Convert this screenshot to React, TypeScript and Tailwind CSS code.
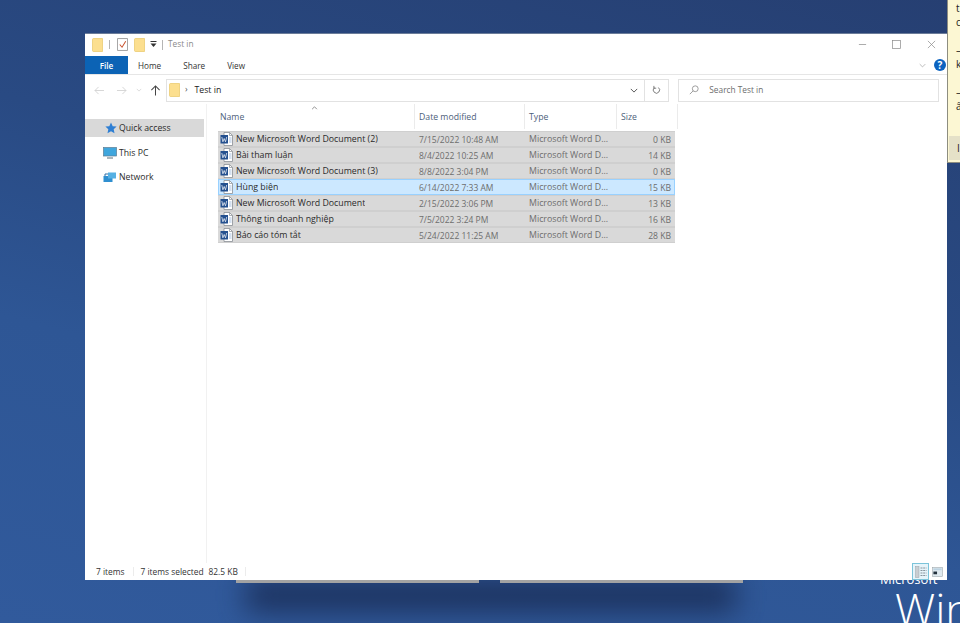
const font = { fontFamily: '"Open Sans", "Noto Sans", sans-serif' };

function Folder({ className = "" }: { className?: string }) {
  return (
    <svg viewBox="0 0 11 14" className={className}>
      <path d="M0.5 1.5 Q0.5 0.5 1.5 0.5 H10.5 V13.5 H1.5 Q0.5 13.5 0.5 12.5 Z" fill="#fcdf8f" stroke="#e8c766" strokeWidth="0.7" />
    </svg>
  );
}

function WordIcon() {
  return (
    <svg viewBox="0 0 13 14" className="w-[13px] h-[14px] shrink-0">
      <path d="M4 0.5 H9.5 L12.5 3.5 V13.5 H4 Z" fill="#ffffff" stroke="#8a8f96" strokeWidth="0.8" />
      <path d="M9.5 0.5 V3.5 H12.5" fill="none" stroke="#8a8f96" strokeWidth="0.7" />
      <rect x="0.5" y="3" width="7.5" height="8.5" fill="#24508f" />
      <path d="M1.8 5 L2.9 9.8 L4.2 6.5 L5.5 9.8 L6.7 5" fill="none" stroke="#ffffff" strokeWidth="0.7" />
      <path d="M9 6 H11.5 M9 8 H11.5 M9 10 H11.5" stroke="#7ea3d3" strokeWidth="0.7" />
    </svg>
  );
}

const rows = [
  ["New Microsoft Word Document (2)", "7/15/2022 10:48 AM", "0 KB"],
  ["Bài tham luận", "8/4/2022 10:25 AM", "14 KB"],
  ["New Microsoft Word Document (3)", "8/8/2022 3:04 PM", "0 KB"],
  ["Hùng biện", "6/14/2022 7:33 AM", "15 KB"],
  ["New Microsoft Word Document", "2/15/2022 3:06 PM", "13 KB"],
  ["Thông tin doanh nghiệp", "7/5/2022 3:24 PM", "16 KB"],
  ["Báo cáo tóm tắt", "5/24/2022 11:25 AM", "28 KB"],
];

function Row({ r, active }: { r: string[]; active: boolean }) {
  return (
    <div
      className={`flex items-center h-[16px] border-y ${
        active ? "bg-[#cce8ff] border-[#99d1ff] shadow-[inset_1px_0_0_#99d1ff,inset_-1px_0_0_#99d1ff]" : "bg-[#d9d9d9] border-[#cfcfcf]"
      }`}
    >
      <div className="w-[196px] pl-[2px] flex items-center gap-[3px] text-[#2b2b2b] text-[8.8px]">
        <WordIcon />
        <span className="truncate pt-[2px]">{r[0]}</span>
      </div>
      <div className="w-[110px] pl-[5px] pt-[2px] text-[#6d6d6d] text-[8.5px]">{r[1]}</div>
      <div className="w-[92px] pl-[5px] pt-[2px] text-[#6d6d6d] text-[8.8px]">Microsoft Word D...</div>
      <div className="w-[57px] text-right pr-[2px] pt-[2px] text-[#6d6d6d] text-[8.6px]">{r[2]}</div>
    </div>
  );
}

function NavItem({ icon, label, active = false }: { icon: React.ReactNode; label: string; active?: boolean }) {
  return (
    <div className={`h-[18px] w-[119px] flex items-center gap-[2px] pl-[18px] text-[8.7px] text-[#2b2b2b] ${active ? "bg-[#d9d9d9]" : ""}`}>
      {icon}
      <span className="pt-[2px]">{label}</span>
    </div>
  );
}

export default function App() {
  return (
    <div
      style={font}
      className="relative w-[960px] h-[623px] overflow-hidden bg-[linear-gradient(15deg,#315a9c_0%,#2e5695_35%,#294a83_60%,#263f72_100%)]"
    >
      {/* Shadows and grey bars of windows behind */}
      <div className="absolute left-[246px] top-[578px] w-[490px] h-[34px] bg-[#16264c] opacity-75 blur-[14px]" />
      <div className="absolute left-[236px] top-[580px] w-[243px] h-[3px] bg-[#a3a3a3]" />
      <div className="absolute left-[500px] top-[580px] w-[243px] h-[3px] bg-[#a3a3a3]" />

      {/* Microsoft Windows wordmark */}
      <div className="absolute left-[880px] top-[570px] text-[13px] leading-[18px] text-white">Microsoft</div>
      <div className="absolute left-[895px] top-[581px] text-[45px] leading-[56px] font-light text-white whitespace-nowrap">
        Windows
      </div>

      {/* Yellow note */}
      <div className="absolute left-[947px] top-0 w-[40px] h-[163px] bg-[#fcf7d3] border-l border-b border-[#8d8d80] text-[10px] leading-[14px] text-[#222222] pl-[8px] pt-[1px]">
        <div>t</div>
        <div>c</div>
        <div className="h-[14px]" />
        <div>–</div>
        <div>k</div>
        <div className="h-[14px]" />
        <div>–</div>
        <div>â</div>
        <div className="absolute left-[1px] top-[136px] w-[39px] h-[24px] bg-[#e5e1c8] pl-[8px] pt-[5px] text-[10px]">I</div>
      </div>

      {/* Explorer window */}
      <div className="absolute left-[85px] top-[33px] w-[862px] h-[547px] bg-white flex flex-col border-t border-[#6b7c99]">
        {/* Title bar */}
        <div className="h-[22px] pb-[1px] flex items-center pl-[7px] shrink-0">
          <Folder className="w-[11px] h-[14px]" />
          <div className="w-px h-[9px] bg-[#b5b5b5] ml-[6px]" />
          <svg viewBox="0 0 12 14" className="w-[11px] h-[13px] ml-[7px]">
            <path d="M0.5 0.5 H11.5 V13.5 H0.5 Z" fill="#fff" stroke="#9a9a9a" />
            <path d="M3 7 L5.5 10 L9.5 3.5" fill="none" stroke="#c8502b" strokeWidth="1.1" />
          </svg>
          <Folder className="w-[11px] h-[14px] ml-[6px]" />
          <svg viewBox="0 0 7 7" className="w-[7px] h-[7px] ml-[5px]">
            <path d="M0.5 0.5 H6.5" stroke="#333" />
            <path d="M0.5 2.5 H6.5 L3.5 6 Z" fill="#333" />
          </svg>
          <div className="w-px h-[10px] bg-[#b5b5b5] ml-[5px]" />
          <span className="ml-[5px] text-[8.3px] text-[#8a8a8a]">Test in</span>
          <div className="ml-auto flex items-center pr-[11px]">
            <svg viewBox="0 0 10 10" className="w-[9px] h-[9px] mr-[25px]"><path d="M1 5 H9" stroke="#8c8c8c" strokeWidth="0.8" /></svg>
            <svg viewBox="0 0 10 10" className="w-[9px] h-[9px] mr-[26px]"><rect x="0.5" y="0.5" width="9" height="9" fill="none" stroke="#8c8c8c" strokeWidth="0.8" /></svg>
            <svg viewBox="0 0 10 10" className="w-[9px] h-[9px]"><path d="M1 1 L9 9 M9 1 L1 9" stroke="#8c8c8c" strokeWidth="0.8" /></svg>
          </div>
        </div>

        {/* Ribbon tabs */}
        <div className="h-[19px] flex items-center shrink-0 border-b border-[#e6e6e6] text-[8.2px] text-[#333333]">
          <div className="w-[43px] h-full bg-[#0c63b5] text-white font-semibold flex items-center justify-center pt-[2px]">File</div>
          <div className="ml-[10px] pt-[3px]">Home</div>
          <div className="ml-[22px] pt-[3px]">Share</div>
          <div className="ml-[22px] pt-[3px]">View</div>
          <div className="ml-auto flex items-center pr-[1px]">
            <svg viewBox="0 0 10 6" className="w-[7px] h-[5px] mr-[8px]"><path d="M1 1 L5 5 L9 1" fill="none" stroke="#a0a0a0" /></svg>
            <div className="w-[12px] h-[12px] rounded-full bg-[#0c63c0] text-white text-[10px] leading-[12px] font-bold text-center">?</div>
          </div>
        </div>

        {/* Address row */}
        <div className="h-[29px] pt-[1px] flex items-center shrink-0 pl-[9px] pr-[8px]">
          <svg viewBox="0 0 12 10" className="w-[11px] h-[9px]"><path d="M11 5 H1 M5 1 L1 5 L5 9" fill="none" stroke="#d2d2d2" /></svg>
          <svg viewBox="0 0 12 10" className="w-[11px] h-[9px] ml-[11px]"><path d="M1 5 H11 M7 1 L11 5 L7 9" fill="none" stroke="#d2d2d2" /></svg>
          <svg viewBox="0 0 8 5" className="w-[6px] h-[4px] ml-[9px]"><path d="M1 1 L4 4 L7 1" fill="none" stroke="#d2d2d2" /></svg>
          <svg viewBox="0 0 12 12" className="w-[11px] h-[11px] ml-[8px]"><path d="M6 11.5 V1 M1.5 5.5 L6 1 L10.5 5.5" fill="none" stroke="#444" strokeWidth="1.1" /></svg>
          <div className="ml-[5px] w-[504px] h-[23px] border border-[#e2e2e2] flex items-center pl-[2px] text-[8.7px] text-[#222222]">
            <Folder className="w-[11px] h-[14px]" />
            <span className="ml-[5px] text-[#555555]">›</span>
            <span className="ml-[7px] pt-[2px]">Test in</span>
            <div className="ml-auto h-full flex items-center">
              <svg viewBox="0 0 10 6" className="w-[8px] h-[5px] mr-[6px]"><path d="M1 1 L5 5 L9 1" fill="none" stroke="#555" strokeWidth="1.2" /></svg>
              <div className="h-full w-[24px] border-l border-[#e2e2e2] flex items-center justify-center">
                <svg viewBox="0 0 12 12" className="w-[9px] h-[10px]"><path d="M3 3 A4.2 4.2 0 1 0 8.5 2.7" fill="none" stroke="#555" strokeWidth="1" /><path d="M2.5 0.5 V3.6 H5.6" fill="none" stroke="#555" strokeWidth="1" /></svg>
              </div>
            </div>
          </div>
          <div className="ml-[9px] w-[261px] h-[23px] border border-[#e2e2e2] flex items-center pl-[10px] text-[8.3px] text-[#6d6d6d]">
            <svg viewBox="0 0 12 12" className="w-[10px] h-[10px]"><circle cx="7.5" cy="4.5" r="3.5" fill="none" stroke="#8d8d8d" /><path d="M5 7 L1 11" stroke="#8d8d8d" /></svg>
            <span className="ml-[10px]">Search Test in</span>
          </div>
        </div>

        {/* Body */}
        <div className="flex-1 flex min-h-0">
          <aside className="w-[122px] border-r border-[#f1f1f1] pt-[15px] shrink-0">
            <NavItem
              active
              icon={<svg viewBox="0 0 12 12" className="w-[12px] h-[12px] ml-[2px]"><path d="M6 0.5 L7.7 4.2 L11.6 4.6 L8.7 7.2 L9.5 11.3 L6 9.2 L2.5 11.3 L3.3 7.2 L0.4 4.6 L4.3 4.2 Z" fill="#2f7fd3" /></svg>}
              label="Quick access"
            />
            <div className="h-[7px]" />
            <NavItem
              icon={<svg viewBox="0 0 14 12" className="w-[14px] h-[12px]"><rect x="0.5" y="0.5" width="13" height="8.5" fill="#3fa6dd" stroke="#5d7d93" strokeWidth="0.7" /><path d="M4 11 H10" stroke="#8a979f" strokeWidth="1.4" /></svg>}
              label="This PC"
            />
            <div className="h-[6px]" />
            <NavItem
              icon={<svg viewBox="0 0 14 12" className="w-[14px] h-[12px]"><rect x="0.5" y="5" width="9" height="6" fill="#2f8fd0" /><rect x="5" y="1.5" width="8" height="6" fill="#56b0e3" /><path d="M2 5 V3 H5" stroke="#2f6fa5" fill="none" /></svg>}
              label="Network"
            />
          </aside>

          <main className="flex-1 relative pl-[11px] min-w-0">
            <div className="absolute left-[104px] top-[2px]">
              <svg viewBox="0 0 8 5" className="w-[7px] h-[4px]"><path d="M1 4 L4 1 L7 4" fill="none" stroke="#777" /></svg>
            </div>
            {/* Header */}
            <div className="h-[25px] flex text-[8.7px] text-[#4c607a] w-[460px]">
              <div className="w-[197px] pl-[2px] flex items-center pt-[3px] border-r border-[#ebebeb]">Name</div>
              <div className="w-[110px] pl-[4px] flex items-center pt-[3px] border-r border-[#ebebeb]">Date modified</div>
              <div className="w-[92px] pl-[4px] flex items-center pt-[3px] border-r border-[#ebebeb]">Type</div>
              <div className="w-[61px] pl-[4px] flex items-center pt-[3px] border-r border-[#ebebeb]">Size</div>
            </div>
            <div className="w-[457px] mt-[2px]">
              {rows.map((r, i) => (
                <Row key={r[0]} r={r} active={i === 3} />
              ))}
            </div>
          </main>
        </div>

        {/* Status bar */}
        <div className="h-[17px] flex items-center shrink-0 pl-[11px] pr-[4px] text-[8.4px] text-[#333333]">
          <span className="pt-[2px]">7 items</span>
          <div className="w-px h-[9px] bg-[#ececec] ml-[8px]" />
          <span className="ml-[7px] pt-[2px]">7 items selected</span>
          <span className="ml-[5px] pt-[2px]">82.5 KB</span>
          <div className="w-px h-[9px] bg-[#ececec] ml-[7px]" />
          <div className="ml-auto flex items-center gap-[3px]">
            <div className="w-[17px] h-[17px] border border-[#7cc4da] bg-[#e6f4fa] flex items-center justify-center">
              <svg viewBox="0 0 12 12" className="w-[12px] h-[12px]"><rect x="0.5" y="0.5" width="3.5" height="11" fill="#c9ced2" stroke="#9aa3a8" strokeWidth="0.5" /><path d="M5.5 2 H11.5 M5.5 4.5 H11.5 M5.5 7 H11.5 M5.5 9.5 H11.5" stroke="#6e7b84" strokeWidth="0.8" strokeDasharray="2 0.7" /></svg>
            </div>
            <svg viewBox="0 0 12 11" className="w-[11px] h-[10px]"><rect x="0.5" y="0.5" width="11" height="10" fill="#dfe9ef" stroke="#9aa3a8" strokeWidth="0.6" /><rect x="1.5" y="1.5" width="9" height="2" fill="#bcd3e2" /><rect x="1.5" y="5" width="4" height="3" fill="#23303c" /></svg>
          </div>
        </div>
      </div>
    </div>
  );
}
